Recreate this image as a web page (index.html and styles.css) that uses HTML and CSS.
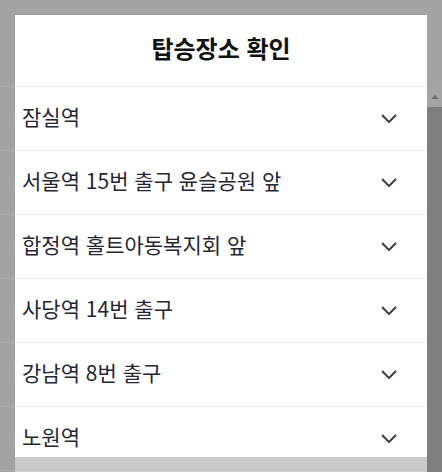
FILE: index.html
```html
<!DOCTYPE html>
<html lang="ko">
<head>
<meta charset="utf-8">
<title>탑승장소 확인</title>
<link rel="stylesheet" href="styles.css">
</head>
<body>
<div class="page">
  <div class="page-head"></div>
  <div class="page-body">
    <div class="page-list">
      <div class="page-row"></div>
      <div class="page-row"></div>
      <div class="page-row"></div>
      <div class="page-row"></div>
      <div class="page-row"></div>
      <div class="page-row"></div>
      <div class="page-row"></div>
    </div>
    <div class="scrollbar">
      <div class="sb-btn"><span class="sb-arrow"></span></div>
      <div class="sb-track"></div>
    </div>
  </div>
</div>

<div class="modal">
  <div class="modal-head"><h1 class="modal-title">탑승장소 확인</h1></div>
  <ul class="stop-list">
    <li class="stop"><span class="stop-name">잠실역</span><svg class="chev" width="16" height="9" viewBox="0 0 16 9"><polyline points="1,1 8,8 15,1"/></svg></li>
    <li class="stop"><span class="stop-name">서울역 15번 출구 윤슬공원 앞</span><svg class="chev" width="16" height="9" viewBox="0 0 16 9"><polyline points="1,1 8,8 15,1"/></svg></li>
    <li class="stop"><span class="stop-name">합정역 홀트아동복지회 앞</span><svg class="chev" width="16" height="9" viewBox="0 0 16 9"><polyline points="1,1 8,8 15,1"/></svg></li>
    <li class="stop"><span class="stop-name">사당역 14번 출구</span><svg class="chev" width="16" height="9" viewBox="0 0 16 9"><polyline points="1,1 8,8 15,1"/></svg></li>
    <li class="stop"><span class="stop-name">강남역 8번 출구</span><svg class="chev" width="16" height="9" viewBox="0 0 16 9"><polyline points="1,1 8,8 15,1"/></svg></li>
    <li class="stop"><span class="stop-name">노원역</span><svg class="chev" width="16" height="9" viewBox="0 0 16 9"><polyline points="1,1 8,8 15,1"/></svg></li>
  </ul>
  <div class="modal-foot"><div class="foot-line"></div></div>
</div>
</body>
</html>
```

FILE: styles.css
```css
* { box-sizing: border-box; }
html, body {
  margin: 0;
  padding: 0;
  width: 442px;
  height: 472px;
  overflow: hidden;
  background: #a3a3a3;
  font-family: "Noto Sans CJK KR", "Noto Sans", sans-serif;
}
.page {
  display: flex;
  flex-direction: column;
  height: 472px;
}
.page-head {
  height: 86px;
  flex: none;
}
.page-body {
  flex: 1;
  display: flex;
  min-height: 0;
}
.page-list {
  flex: 1;
  overflow: hidden;
}
.page-row {
  height: 64px;
  border-top: 1px solid #acacac;
}
.scrollbar {
  width: 15px;
  flex: none;
  display: flex;
  flex-direction: column;
}
.sb-btn {
  height: 21px;
  background: #a4a4a4;
  display: flex;
  align-items: center;
  justify-content: center;
}
.sb-arrow {
  width: 0;
  height: 0;
  border-left: 4px solid transparent;
  border-right: 4px solid transparent;
  border-bottom: 4px solid #6c6c6c;
}
.sb-track {
  flex: 1;
  background: #7e7e7e;
}
.modal {
  position: absolute;
  left: 15px;
  top: 15px;
  width: 412px;
  height: 470px;
  background: #fff;
  display: flex;
  flex-direction: column;
}
.modal-head {
  height: 71px;
  flex: none;
  display: flex;
  align-items: center;
  justify-content: center;
  padding-bottom: 6px;
}
.modal-title {
  margin: 0;
  font-size: 24px;
  font-weight: 700;
  color: #111;
  line-height: 28px;
}
.stop-list {
  list-style: none;
  margin: 0 2px 0 0;
  padding: 0;
  height: 371px;
  overflow: hidden;
  flex: none;
}
.stop {
  height: 64px;
  border-top: 1px solid #ebebeb;
  display: flex;
  align-items: center;
  justify-content: space-between;
  padding: 0 28px 0 7px;
}
.stop-name {
  font-size: 21px;
  line-height: 24px;
  margin-bottom: 5px;
  color: #262633;
}
.chev {
  display: block;
  fill: none;
  stroke: #3b3f4a;
  stroke-width: 2;
}
.modal-foot {
  flex: 1;
  background: #cbcbcb;
}
.foot-line {
  margin-top: 12px;
  height: 1px;
  background: #c0c0c0;
  margin-right: 1px;
}
```
